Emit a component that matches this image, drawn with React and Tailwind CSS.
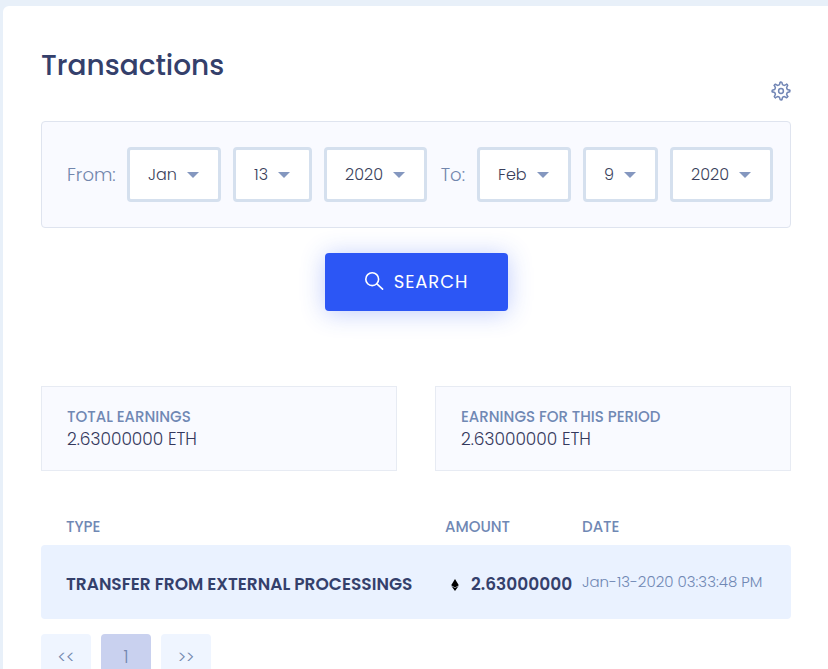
const months = ['Jan', 'Feb', 'Mar', 'Apr', 'May', 'Jun', 'Jul', 'Aug', 'Sep', 'Oct', 'Nov', 'Dec'];
const days = Array.from({ length: 31 }, (_, i) => i + 1);
const years = [2018, 2019, 2020];

const dateFields = [
  {
    label: 'From:',
    id: 'from',
    labelWidth: 'w-12',
    selects: [
      { name: 'month', value: 'Jan', options: months, width: 'w-[94px]' },
      { name: 'day', value: 13, options: days, width: 'w-[79px]' },
      { name: 'year', value: 2020, options: years, width: 'w-[103px]' },
    ],
  },
  {
    label: 'To:',
    id: 'to',
    labelWidth: 'w-[26px]',
    selects: [
      { name: 'month', value: 'Feb', options: months, width: 'w-[94px]' },
      { name: 'day', value: 9, options: days, width: 'w-[75px]' },
      { name: 'year', value: 2020, options: years, width: 'w-[103px]' },
    ],
  },
];

const stats = [
  { label: 'TOTAL EARNINGS', value: '2.63000000 ETH' },
  { label: 'EARNINGS FOR THIS PERIOD', value: '2.63000000 ETH' },
];

const transactions = [
  { type: 'TRANSFER FROM EXTERNAL PROCESSINGS', amount: '2.63000000', date: 'Jan-13-2020 03:33:48 PM' },
];

const pages = [
  { text: '<<', label: 'Previous page' },
  { text: '1', label: 'Page 1', active: true },
  { text: '>>', label: 'Next page' },
];

function GearIcon() {
  return (
    <svg viewBox="0 0 20 20" className="w-5 h-5" fill="none" stroke="currentColor" strokeWidth="1.5" strokeLinecap="round" strokeLinejoin="round">
      {[0, 45, 90, 135, 180, 225, 270, 315].map((angle) => (
        <path key={angle} transform={`rotate(${angle} 10 10)`} d="M9.2 1.3Q10 .9 10.8 1.3L11.5 3.6Q12.4 4.2 13.46 4.4L15.59 3.3" />
      ))}
      <circle cx="10" cy="10" r="2.4" />
    </svg>
  );
}

function SearchIcon() {
  return (
    <svg viewBox="0 0 20 20" className="w-5 h-5" fill="none" stroke="currentColor" strokeWidth="1.6" strokeLinecap="round">
      <circle cx="8.2" cy="7.2" r="6.4" />
      <path d="M12.9 11.9L18.6 17.2" />
    </svg>
  );
}

function EthIcon() {
  return (
    <svg viewBox="0 0 8 12" className="w-2 h-3" fill="#000">
      <path d="M4 0L7.8 6.3L4 8.4L.2 6.3Z" />
      <path d="M.4 7L4 9L7.6 7L4 12Z" />
    </svg>
  );
}

function DateSelect({ id, label, value, options, width }) {
  return (
    <div className={`relative ${width}`}>
      <select
        id={id}
        aria-label={label}
        defaultValue={value}
        className="w-full h-[55px] pl-[18px] pr-8 appearance-none rounded border-[3px] border-[#d5e0ee] bg-white text-base font-light text-[#3a3f5c]"
      >
        {options.map((option) => (
          <option key={option}>{option}</option>
        ))}
      </select>
      <svg viewBox="0 0 12 6" className="absolute right-[22px] top-1/2 -translate-y-1/2 w-3 h-[6px] pointer-events-none" fill="#8497bf">
        <path d="M0 0H12L6 6Z" />
      </svg>
    </div>
  );
}

export default function App() {
  return (
    <div className="min-h-screen bg-[#e8f0f9] pl-[3px] pt-[6px] font-['Poppins','Inter',sans-serif]">
      <main className="min-h-screen rounded-tl-md bg-white pl-[38px] pr-[37px] pt-10 pb-10">
        <h1 className="text-[28px] leading-10 font-medium text-[#34406b]">Transactions</h1>

        {/* Settings */}
        <div className="flex justify-end h-10 -mt-[5px]">
          <button aria-label="Settings" className="h-5 text-[#7286b5]">
            <GearIcon />
          </button>
        </div>

        {/* Date range */}
        <form onSubmit={(e) => e.preventDefault()}>
          <div className="flex items-center gap-3 rounded border border-[#dfe4ef] bg-[#f9faff] py-[25px] pl-[25px]">
            {dateFields.map((field) => (
              <div key={field.id} className="flex items-center gap-3">
                <label htmlFor={`${field.id}-month`} className={`${field.labelWidth} whitespace-nowrap text-right text-lg font-light text-[#7286ad]`}>
                  {field.label}
                </label>
                {field.selects.map((s) => (
                  <DateSelect
                    key={s.name}
                    id={`${field.id}-${s.name}`}
                    label={`${field.label} ${s.name}`}
                    value={s.value}
                    options={s.options}
                    width={s.width}
                  />
                ))}
              </div>
            ))}
          </div>
          <div className="flex justify-center mt-[25px]">
            <button type="submit" className="flex items-center justify-center gap-[10px] w-[183px] h-[58px] rounded bg-[#2c56f5] text-lg tracking-wider text-white shadow-[0_2px_24px_rgba(44,86,245,0.3)]">
              <SearchIcon />
              SEARCH
            </button>
          </div>
        </form>

        {/* Totals */}
        <div className="grid grid-cols-2 gap-[38px] mt-[75px]">
          {stats.map((stat) => (
            <div key={stat.label} className="h-[85px] border border-[#e7ebf3] bg-[#f9faff] px-[25px] pt-[19px]">
              <p className="text-[15px] leading-[22px] font-medium text-[#7088b4]">{stat.label}</p>
              <p className="text-[17px] leading-[22px] font-light text-[#34385c]">{stat.value}</p>
            </div>
          ))}
        </div>

        <table className="w-full mt-9 text-left whitespace-nowrap">
          <thead>
            <tr className="h-[38px] text-[15px] text-[#7088b4]">
              <th className="w-[404px] pl-[25px] pt-[2px] font-medium">TYPE</th>
              <th className="w-[137px] pt-[2px] font-medium">AMOUNT</th>
              <th className="pt-[2px] font-medium">DATE</th>
            </tr>
          </thead>
          <tbody>
            {transactions.map((tx) => (
              <tr key={tx.date} className="h-[74px] bg-[#eaf2ff] text-[#34406b]">
                <td className="rounded-l pl-[25px] pt-[6px] text-[17px] font-semibold">{tx.type}</td>
                <td className="pt-[6px] pl-[6px]">
                  <span className="flex items-center gap-3 text-[17px] font-semibold">
                    <EthIcon />
                    {tx.amount}
                  </span>
                </td>
                <td className="rounded-r text-[15px] font-light text-[#7088b4]">{tx.date}</td>
              </tr>
            ))}
          </tbody>
        </table>

        {/* Pagination */}
        <nav className="flex gap-[10px] mt-[15px]">
          {pages.map((page) => (
            <button
              key={page.label}
              aria-label={page.label}
              className={`w-[50px] h-12 rounded text-[17px] font-light text-[#7286ad] ${page.active ? 'bg-[#c9d1ef]' : 'bg-[#eff5ff]'}`}
            >
              {page.text}
            </button>
          ))}
        </nav>
      </main>
    </div>
  );
}
